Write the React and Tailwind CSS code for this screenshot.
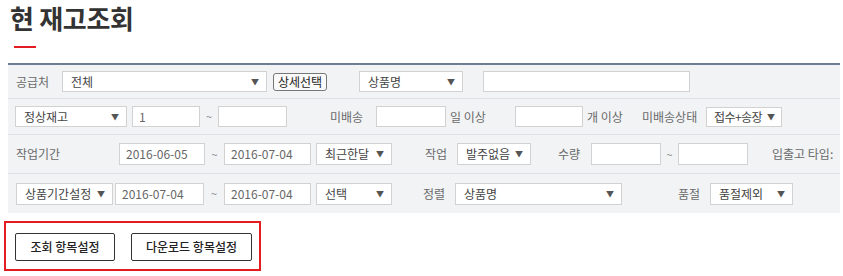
import React from 'react';

const FONT = "font-['Noto_Sans_CJK_KR','Noto_Sans',sans-serif]";

function Select({ value, w, h = 'h-[21px]', className = '' }) {
  return (
    <div className={`${w} ${h} ${className} flex items-center justify-between shrink-0 bg-white border border-[#d2d2d2] pl-2 pr-[7px] text-[12px] text-[#444]`}>
      <span className="whitespace-nowrap leading-none">{value}</span>
      <span className="text-[8px] text-[#555] leading-none">▼</span>
    </div>
  );
}

function Input({ value = '', w, h = 'h-[21px]', className = '' }) {
  return (
    <div className={`${w} ${h} ${className} flex items-center shrink-0 bg-white border border-[#d2d2d2] pl-[6px] text-[12px] text-[#666]`}>
      <span className="leading-none whitespace-nowrap">{value}</span>
    </div>
  );
}

function Label({ children, w, className = '' }) {
  return (
    <span className={`${w} ${className} shrink-0 whitespace-nowrap text-[12px] text-[#6a6a6a] leading-none`}>{children}</span>
  );
}

function Tilde({ w }) {
  return <span className={`${w} shrink-0 text-center text-[11px] text-[#888] leading-none`}>~</span>;
}

export default function App() {
  return (
    <div className={`${FONT} w-[843px] h-[276px] bg-white overflow-hidden`}>

      {/* Title */}
      <div className="h-[63px] pt-[2px]">
        <h1 className="ml-[10px] text-[26px] leading-[32px] font-bold text-[#333] tracking-[-0.3px]">현 재고조회</h1>
        <div className="ml-[14px] mt-[12px] w-[22px] h-[2px] bg-[#e31b23]" />
      </div>

      {/* Search panel */}
      <div className="ml-2 w-[832px] bg-[#f1f3f5] border-t-2 border-[#6d7d93]">

        {/* Row 1 */}
        <div className="h-[34px] flex items-center border-b border-[#dde1e5] pl-2">
          <Label w="w-[46px]">공급처</Label>
          <Select value="전체" w="w-[205px]" />
          <button className="ml-[6px] w-[54px] h-[18px] shrink-0 rounded-[3px] border border-[#777] bg-[#fafafa] text-[12px] leading-none text-[#222]">상세선택</button>
          <Select value="상품명" w="w-[104px]" className="ml-[32px]" />
          <Input w="w-[207px]" className="ml-[20px]" />
        </div>

        {/* Row 2 */}
        <div className="h-[36px] flex items-center border-b border-[#dde1e5] pl-[7px]">
          <Select value="정상재고" w="w-[112px]" />
          <Input value="1" w="w-[68px]" className="ml-[5px]" />
          <Tilde w="w-[18px]" />
          <Input w="w-[69px]" />
          <Label w="w-[46px]" className="ml-[43px]">미배송</Label>
          <Input w="w-[70px]" />
          <Label w="w-[65px]" className="ml-[4px]">일 이상</Label>
          <Input w="w-[68px]" />
          <Label w="w-[55px]" className="ml-[4px]">개 이상</Label>
          <Label w="w-[64px]">미배송상태</Label>
          <div className="w-[76px] h-[20px] flex items-center justify-between shrink-0 bg-white border border-[#d2d2d2] pl-[7px] pr-[6px] text-[12px] text-[#444]">
            <span className="whitespace-nowrap leading-none tracking-[-0.6px]">접수+송장</span>
            <span className="text-[8px] text-[#555] leading-none">▼</span>
          </div>
        </div>

        {/* Row 3 */}
        <div className="h-[39px] flex items-center border-b border-[#dde1e5] pl-2">
          <Label w="w-[103px]">작업기간</Label>
          <Input value="2016-06-05" w="w-[86px]" h="h-[22px]" />
          <Tilde w="w-[19px]" />
          <Input value="2016-07-04" w="w-[87px]" h="h-[22px]" />
          <Select value="최근한달" w="w-[76px]" h="h-[22px]" className="ml-[5px]" />
          <Label w="w-[32px]" className="ml-[33px]">작업</Label>
          <Select value="발주없음" w="w-[74px]" h="h-[22px]" />
          <Label w="w-[33px]" className="ml-[27px]">수량</Label>
          <Input w="w-[70px]" h="h-[22px]" />
          <Tilde w="w-[17px]" />
          <Input w="w-[70px]" h="h-[22px]" />
          <Label w="w-[70px]" className="ml-[24px]">입출고 타입:</Label>
        </div>

        {/* Row 4 */}
        <div className="h-[39px] flex items-center pl-2">
          <Select value="상품기간설정" w="w-[97px]" h="h-[22px]" />
          <Input value="2016-07-04" w="w-[89px]" h="h-[22px]" className="ml-[2px]" />
          <Tilde w="w-[20px]" />
          <Input value="2016-07-04" w="w-[87px]" h="h-[22px]" />
          <Select value="선택" w="w-[76px]" h="h-[22px]" className="ml-[5px]" />
          <Label w="w-[32px]" className="ml-[31px]">정렬</Label>
          <Select value="상품명" w="w-[167px]" h="h-[22px]" />
          <Label w="w-[32px]" className="ml-[56px]">품절</Label>
          <Select value="품절제외" w="w-[83px]" h="h-[22px]" />
        </div>
      </div>

      {/* Settings buttons */}
      <div className="ml-1 mt-[8px] w-[257px] h-[50px] border-2 border-[#e31b23] flex items-start gap-4 pt-[10px] pl-[9px]">
        <button className="w-[100px] h-[28px] rounded-[2px] border border-[#333] bg-white text-[12px] font-medium text-[#222]">조회 항목설정</button>
        <button className="w-[121px] h-[28px] rounded-[2px] border border-[#333] bg-white text-[12px] font-medium text-[#222]">다운로드 항목설정</button>
      </div>
    </div>
  );
}
